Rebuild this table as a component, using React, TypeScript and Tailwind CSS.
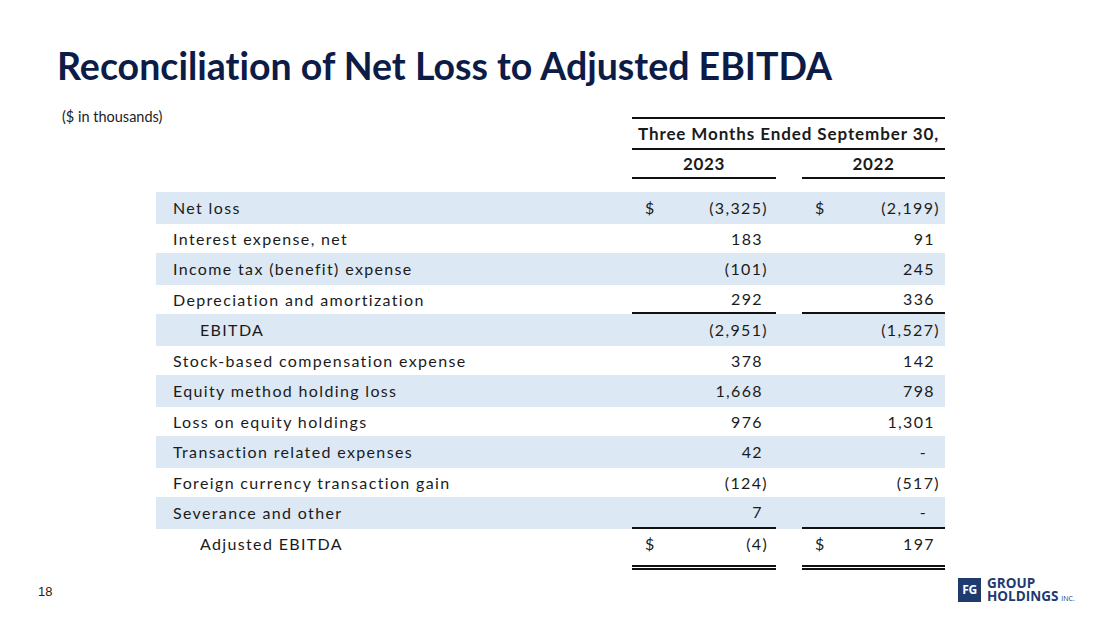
import React from "react";

type Row = {
  label: string;
  a: string;
  b: string;
  shaded: boolean;
  indent?: boolean;
  dollar?: boolean;
  underline?: boolean;
  total?: boolean;
};

const rows: Row[] = [
  { label: "Net loss", a: "(3,325)", b: "(2,199)", shaded: true, dollar: true },
  { label: "Interest expense, net", a: "183", b: "91", shaded: false },
  { label: "Income tax (benefit) expense", a: "(101)", b: "245", shaded: true },
  { label: "Depreciation and amortization", a: "292", b: "336", shaded: false, underline: true },
  { label: "EBITDA", a: "(2,951)", b: "(1,527)", shaded: true, indent: true },
  { label: "Stock-based compensation expense", a: "378", b: "142", shaded: false },
  { label: "Equity method holding loss", a: "1,668", b: "798", shaded: true },
  { label: "Loss on equity holdings", a: "976", b: "1,301", shaded: false },
  { label: "Transaction related expenses", a: "42", b: "-", shaded: true },
  { label: "Foreign currency transaction gain", a: "(124)", b: "(517)", shaded: false },
  { label: "Severance and other", a: "7", b: "-", shaded: true, underline: true },
  { label: "Adjusted EBITDA", a: "(4)", b: "197", shaded: false, indent: true, dollar: true, total: true },
];

function Val({ v, dollar, right, total }: { v: string; dollar?: boolean; right: string; total?: boolean }) {
  const paren = v.startsWith("(");
  const dash = v === "-";
  return (
    <div className={`flex items-center justify-between ${total ? "h-[30px]" : "h-full"} pl-[13px] ${right}`}>
      <span>{dollar ? "$" : ""}</span>
      <span className="flex">
        <span>{v}</span>
        {!paren && <span className={`inline-block ${dash ? "w-[13px]" : "w-[5px]"}`} />}
      </span>
    </div>
  );
}

export default function App() {
  return (
    <div
      className="relative w-[1100px] h-[619px] bg-white overflow-hidden text-[#1b1b1b] [font-variant-ligatures:none]"
      style={{ fontFamily: "Lato, 'Open Sans', sans-serif" }}
    >
      <div className="pl-[57px] pt-[42px] text-[37.5px] leading-[48px] font-bold text-[#0d1c47] [font-variant-ligatures:none]">
        Reconciliation of Net Loss to Adjusted EBITDA
      </div>
      <div className="pl-[62px] mt-[19px] text-[14.5px] leading-[16px] text-[#222]">($ in thousands)</div>

      <div className="pl-[156px] -mt-[8px]">
        <div className="w-[789px]">
          <div className="flex">
            <div className="w-[476px]" />
            <div className="w-[313px]">
              <div className="border-t-2 border-b-2 border-[#111] h-[33px] flex items-center justify-center font-bold text-[17px] tracking-[0.9px]">
                Three Months Ended September 30,
              </div>
              <div className="flex h-[29px]">
                <div className="w-[144px] border-b-2 border-[#111] flex items-center justify-center font-bold text-[17px] tracking-[0.6px]">
                  2023
                </div>
                <div className="w-[26px]" />
                <div className="w-[143px] border-b-2 border-[#111] flex items-center justify-center font-bold text-[17px] tracking-[0.6px]">
                  2022
                </div>
              </div>
            </div>
          </div>
          <div className="h-[13px]" />
          {rows.map((r, i) => (
            <div
              key={i}
              className={`flex text-[16px] tracking-[1.35px] ${
                r.total ? "h-[41px]" : r.shaded ? "bg-[#dce8f4] h-[32px]" : "h-[29px]"
              }`}
            >
              <div
                className={`w-[476px] flex items-center ${r.total ? "h-[30px]" : ""} ${
                  r.indent ? "pl-[44px]" : "pl-[17px]"
                }`}
              >
                {r.label}
              </div>
              <div
                className={`w-[144px] ${r.underline ? "border-b-2 border-[#111]" : ""} ${
                  r.total ? "border-b-[5px] border-double border-[#111]" : ""
                }`}
              >
                <Val v={r.a} dollar={r.dollar} right="pr-[8px]" total={r.total} />
              </div>
              <div className="w-[26px]" />
              <div
                className={`w-[143px] ${r.underline ? "border-b-2 border-[#111]" : ""} ${
                  r.total ? "border-b-[5px] border-double border-[#111]" : ""
                }`}
              >
                <Val v={r.b} dollar={r.dollar} right="pr-[5px]" total={r.total} />
              </div>
            </div>
          ))}
        </div>
      </div>

      <div
        className="absolute left-[38px] top-[582px] text-[13px] text-[#222]"
        style={{ fontFamily: "'Liberation Sans', sans-serif" }}
      >
        18
      </div>

      <div
        className="absolute left-[958px] top-[577px] flex items-center gap-[6px]"
        style={{ fontFamily: "'Open Sans', sans-serif" }}
      >
        <div className="w-[23px] h-[24px] bg-[#1e3b70] flex items-center justify-center text-white font-bold text-[12px] tracking-[-0.5px] leading-none">
          FG
        </div>
        <div className="flex flex-col text-[#1e3b70] font-bold">
          <span className="text-[13.5px] leading-[13px]">GROUP</span>
          <span className="text-[13.5px] leading-[13px] flex items-end">
            HOLDINGS<span className="text-[7px] font-normal ml-[3px] leading-[9px]">INC.</span>
          </span>
        </div>
      </div>
    </div>
  );
}
